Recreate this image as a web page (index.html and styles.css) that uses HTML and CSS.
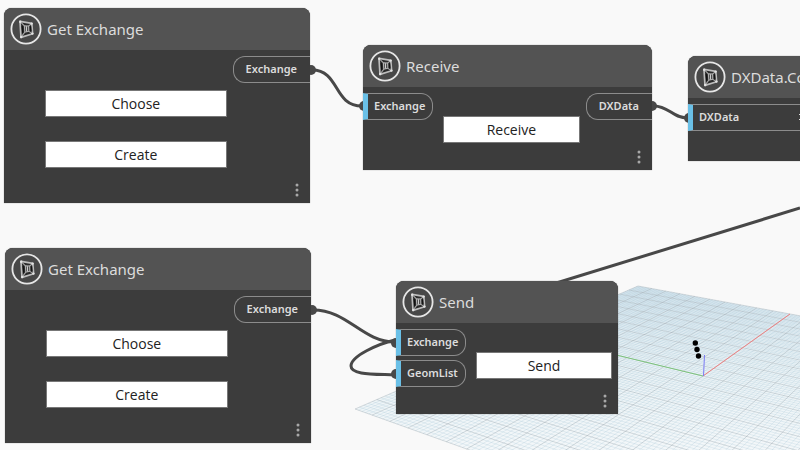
FILE: index.html
```html
<!DOCTYPE html>
<html lang="en">
<head>
  <meta charset="UTF-8" />
  <meta name="viewport" content="width=device-width, initial-scale=1.0"/>
  <title>Data Exchange Graph</title>
  <link rel="stylesheet" href="styles.css">
</head>
<body>
  <svg class="symbols">
    <symbol id="exchangeIcon" viewBox="0 0 32 32">
      <circle cx="16" cy="16" r="14.6" fill="#484848" stroke="#e6e6e6" stroke-width="1.8"/>
      <path d="M10 8.4 L21.8 10.4 L22.6 20.8 L11 24.4 Z" fill="#2a2a2a" stroke="#bdbdbd" stroke-width="1.7" stroke-linejoin="round"/>
      <path d="M14.4 12.8 L18.6 13 L18.8 18.4 L14.8 19.2 Z" fill="#4a4a4a" stroke="#b0b0b0" stroke-width="1.1"/>
      <path d="M10.2 8.6 L14.4 12.8 M21.6 10.6 L18.6 13 M22.4 20.6 L18.8 18.4 M11.2 24 L14.8 19.2" stroke="#a8a8a8" stroke-width="1.1"/>
      <path d="M12.2 13 L12.7 19.8 M20.6 13.4 L20.9 18.2" stroke="#111" stroke-width="1.2"/>
      <path d="M16.4 13.2 L16.6 18.6" stroke="#d0d0d0" stroke-width="1"/>
      <g fill="#e2e2e2">
        <circle cx="10.2" cy="8.8" r="1.2"/>
        <circle cx="21.6" cy="10.6" r="1.2"/>
        <circle cx="22.4" cy="20.6" r="1.2"/>
        <circle cx="11.2" cy="24" r="1.2"/>
      </g>
    </symbol>
    <symbol id="dots" viewBox="0 0 4 14">
      <circle cx="2" cy="2" r="1.5"/>
      <circle cx="2" cy="7" r="1.5"/>
      <circle cx="2" cy="12" r="1.5"/>
    </symbol>
  </svg>

  <main class="workspace">
    <svg class="preview">
      <defs>
        <linearGradient id="planeFill" gradientUnits="userSpaceOnUse" x1="0" y1="286" x2="0" y2="450">
          <stop offset="0" stop-color="#dfebf2"/>
          <stop offset="0.5" stop-color="#ebf3f6"/>
          <stop offset="1" stop-color="#f3f7f9"/>
        </linearGradient>
      </defs>
      <polygon id="plane" fill="url(#planeFill)"/>
      <path id="minorLines" class="minor"/>
      <path id="majorLines" class="major"/>
      <path id="axisX" class="axis-x"/>
      <path id="axisY" class="axis-y"/>
      <path class="axis-z" d="M703.5 376 L704.5 355"/>
      <circle cx="695.3" cy="343" r="2.7"/>
      <circle cx="697" cy="349.5" r="2.7"/>
      <circle cx="698.5" cy="356" r="2.7"/>
    </svg>

    <svg class="wires">
      <path d="M312 70 C340 70 333 106 362 106"/>
      <path d="M654 106 C669 106 672 118 688 118"/>
      <path d="M313 310 C348 310 362 342 395 342"/>
      <path d="M395 340 C378 344 351 356 351 366 C351 375 374 374 395 375"/>
      <path d="M540 288 L800 208"/>
      <g class="ends">
        <circle cx="311" cy="70" r="5"/>
        <circle cx="364" cy="106" r="5"/>
        <circle cx="652" cy="106" r="5"/>
        <circle cx="689" cy="118" r="5"/>
        <circle cx="312" cy="310" r="5"/>
        <circle cx="396" cy="343" r="5"/>
        <circle cx="396" cy="374" r="5"/>
      </g>
    </svg>

    <section class="node get-one">
      <header><svg class="icon"><use href="#exchangeIcon"/></svg><h2>Get Exchange</h2></header>
      <div class="body">
        <div class="content stacked">
          <button class="action">Choose</button>
          <button class="action">Create</button>
        </div>
        <div class="ports out"><span class="port">Exchange</span></div>
      </div>
      <footer><button class="menu" aria-label="Node menu"><svg><use href="#dots"/></svg></button></footer>
    </section>

    <section class="node receive">
      <header><svg class="icon"><use href="#exchangeIcon"/></svg><h2>Receive</h2></header>
      <div class="body">
        <div class="ports in"><span class="port">Exchange</span></div>
        <div class="content"><button class="action">Receive</button></div>
        <div class="ports out"><span class="port">DXData</span></div>
      </div>
      <footer><button class="menu" aria-label="Node menu"><svg><use href="#dots"/></svg></button></footer>
    </section>

    <section class="node dxdata">
      <header><svg class="icon"><use href="#exchangeIcon"/></svg><h2>DXData.Co</h2></header>
      <div class="body">
        <div class="ports in"><span class="port wide">DXData <svg class="chevron"><path d="M1 1 L4 4 L1 7"/></svg></span></div>
      </div>
      <footer></footer>
    </section>

    <section class="node get-two">
      <header><svg class="icon"><use href="#exchangeIcon"/></svg><h2>Get Exchange</h2></header>
      <div class="body">
        <div class="content stacked">
          <button class="action">Choose</button>
          <button class="action">Create</button>
        </div>
        <div class="ports out"><span class="port">Exchange</span></div>
      </div>
      <footer><button class="menu" aria-label="Node menu"><svg><use href="#dots"/></svg></button></footer>
    </section>

    <section class="node send">
      <header><svg class="icon"><use href="#exchangeIcon"/></svg><h2>Send</h2></header>
      <div class="body">
        <div class="ports in">
          <span class="port">Exchange</span>
          <span class="port">GeomList</span>
        </div>
        <div class="content"><button class="action">Send</button></div>
      </div>
      <footer><button class="menu" aria-label="Node menu"><svg><use href="#dots"/></svg></button></footer>
    </section>
  </main>

  <script src="grid.js"></script>
</body>
</html>
```

FILE: styles.css
```css
* {
  box-sizing: border-box;
}
body {
  margin: 0;
  background: #f9f9f9;
  font-family: "Noto Sans", "Open Sans", sans-serif;
}
.symbols {
  position: absolute;
  width: 0;
  height: 0;
}
.workspace {
  position: relative;
  min-height: 100vh;
  overflow: hidden;
}
.preview, .wires {
  position: absolute;
  top: 0;
  left: 0;
  width: 100%;
  height: 100%;
}
.minor, .major, .axis-x, .axis-y, .axis-z {
  fill: none;
  stroke-width: 1;
}
.minor {
  stroke: #8fb9cf;
  stroke-opacity: 0.2;
}
.major {
  stroke: #7d8f99;
  stroke-opacity: 0.3;
}
.axis-x {
  stroke: #f08080;
}
.axis-y {
  stroke: #7cc47c;
}
.axis-z {
  stroke: #7a7af5;
}
.wires path {
  fill: none;
  stroke: #484848;
  stroke-width: 3;
}
.ends {
  fill: #484848;
}

/* nodes */
.node {
  position: absolute;
  background: #3c3c3c;
  border-radius: 8px 8px 0 0;
  box-shadow: 0 0 1px #555;
}
.get-one {
  left: 4px;
  top: 8px;
  width: 306px;
}
.receive {
  left: 363px;
  top: 45px;
  width: 289px;
}
.dxdata {
  left: 688px;
  top: 56px;
  width: 289px;
}
.get-two {
  left: 5px;
  top: 248px;
  width: 306px;
}
.send {
  left: 396px;
  top: 281px;
  width: 222px;
}
.node header {
  display: flex;
  align-items: center;
  gap: 5px;
  height: 42px;
  padding-left: 6px;
  background: #535353;
  border-radius: 8px 8px 0 0;
}
.icon {
  width: 32px;
  height: 32px;
}
.node h2 {
  margin: 0;
  font-size: 15px;
  font-weight: 400;
  line-height: 20px;
  color: #dcdcdc;
}
.body {
  display: flex;
}
.ports {
  display: flex;
  flex-direction: column;
  gap: 4px;
  padding-top: 6px;
}
.port {
  display: flex;
  align-items: center;
  height: 27px;
  padding-bottom: 1px;
  border: 1px solid #8c8c8c;
  font-size: 11px;
  font-weight: 600;
  line-height: 16px;
  color: #dcdcdc;
}
.in .port {
  width: 70px;
  padding-left: 6px;
  border-left: 5px solid #6ac0e7;
  border-radius: 0 12px 12px 0;
}
.out .port {
  padding-right: 13px;
  padding-left: 12px;
  border-right: 0;
  border-radius: 12px 0 0 12px;
}
.in .wide {
  width: 289px;
  border-radius: 0;
  gap: 59px;
}
.chevron {
  width: 6px;
  height: 8px;
  fill: none;
  stroke: #dcdcdc;
}
.content {
  flex: 1;
  padding: 29px 6px 0 10px;
}
.stacked {
  display: flex;
  flex-direction: column;
  gap: 24px;
  padding: 40px 6px 0 41px;
}
.action {
  display: block;
  width: 100%;
  height: 27px;
  padding: 0;
  background: #fff;
  border: 1px solid #777;
  font-family: "Open Sans", sans-serif;
  font-size: 14px;
  line-height: 20px;
  color: #222;
}
.node footer {
  display: flex;
  justify-content: flex-end;
  padding: 15px 9px 6px;
}
.receive footer, .send footer {
  padding-top: 7px;
}
.dxdata footer {
  height: 30px;
}
.menu {
  display: flex;
  padding: 0;
  background: none;
  border: 0;
}
.menu svg {
  width: 8px;
  height: 14px;
  fill: #a8a8a8;
}
```

FILE: grid.js
```javascript
// perspective of the ground plane, u and v run from -1 to 1
function project(u, v) {
  const w = 0.2571 * u + 0.1482 * v + 1;
  const x = (290.1 * u - 96.5 * v + 703) / w;
  const y = (18.7 * u + 7.2 * v + 376) / w;
  return x.toFixed(1) + " " + y.toFixed(1);
}

function line(u1, v1, u2, v2) {
  return "M" + project(u1, v1) + "L" + project(u2, v2);
}

let minor = "";
let major = "";
for (let i = -50; i <= 50; i++) {
  const t = i / 50;
  const d = line(t, -1, t, 1) + line(-1, t, 1, t);
  if (i % 5 === 0) major += d;
  else minor += d;
}

document.getElementById("plane").setAttribute("points",
  [project(-1, -1), project(-1, 1), project(1, 1), project(1, -1)].join(" "));
document.getElementById("minorLines").setAttribute("d", minor);
document.getElementById("majorLines").setAttribute("d", major);
document.getElementById("axisX").setAttribute("d", line(0, 0, 1, 0));
document.getElementById("axisY").setAttribute("d", line(0, 0, 0, 1));
```
